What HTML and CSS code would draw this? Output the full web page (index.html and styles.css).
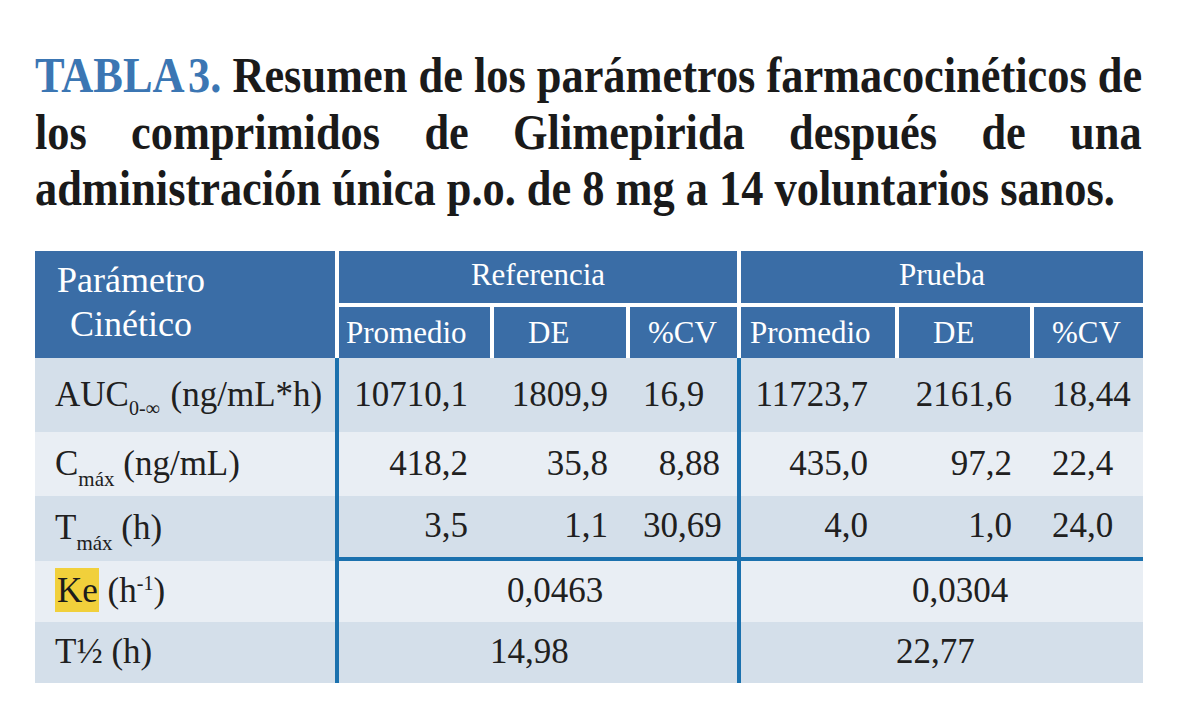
FILE: index.html
```html
<!DOCTYPE html>
<html lang="es">
<head>
<meta charset="utf-8">
<title>Tabla 3</title>
<link rel="stylesheet" href="styles.css">
</head>
<body>
<main class="page">
  <h1 class="title">
    <span class="line just"><span class="tag">TABLA 3.</span> Resumen de los parámetros farmacocinéticos de</span>
    <span class="line just">los comprimidos de Glimepirida después de una</span>
    <span class="line">administración única p.o. de 8 mg a 14 voluntarios sanos.</span>
  </h1>

  <section class="table">
    <div class="thead">
      <div class="th th-param"><span class="param-text">Parámetro<br>Cinético</span></div>
      <div class="th th-group">Referencia</div>
      <div class="th th-group">Prueba</div>
      <div class="th th-sub sub-prom">Promedio</div>
      <div class="th th-sub sub-de">DE</div>
      <div class="th th-sub sub-cv">%CV</div>
      <div class="th th-sub sub-prom2">Promedio</div>
      <div class="th th-sub sub-de">DE</div>
      <div class="th th-sub sub-cv">%CV</div>
    </div>

    <div class="tbody">
      <div class="td label dark"><span>AUC<sub class="sb sb-auc">0-∞</sub> (ng/mL*h)</span></div>
      <div class="td dark c-rp">10710,1</div>
      <div class="td dark c-rd">1809,9</div>
      <div class="td dark c-rc cv-left sep">16,9</div>
      <div class="td dark c-pp">11723,7</div>
      <div class="td dark c-pd">2161,6</div>
      <div class="td dark c-pc">18,44</div>

      <div class="td label light"><span>C<sub class="sb">máx</sub> (ng/mL)</span></div>
      <div class="td light c-rp">418,2</div>
      <div class="td light c-rd">35,8</div>
      <div class="td light c-rc cv-right sep">8,88</div>
      <div class="td light c-pp">435,0</div>
      <div class="td light c-pd">97,2</div>
      <div class="td light c-pc">22,4</div>

      <div class="td label dark"><span>T<sub class="sb">máx</sub> (h)</span></div>
      <div class="td dark c-rp rule">3,5</div>
      <div class="td dark c-rd rule">1,1</div>
      <div class="td dark c-rc cv-left sep rule">30,69</div>
      <div class="td dark c-pp rule">4,0</div>
      <div class="td dark c-pd rule">1,0</div>
      <div class="td dark c-pc rule">24,0</div>

      <div class="td label light"><span><mark class="hl">Ke</mark> (h<sup class="sp">-1</sup>)</span></div>
      <div class="td light span3 sep ke-ref">0,0463</div>
      <div class="td light span3 ke-pru">0,0304</div>

      <div class="td label dark"><span>T½ (h)</span></div>
      <div class="td dark span3 sep th-ref">14,98</div>
      <div class="td dark span3 th-pru">22,77</div>
    </div>
  </section>
</main>
</body>
</html>
```

FILE: styles.css
```css
html, body {
  margin: 0;
  padding: 0;
  background: #ffffff;
}

.page {
  padding: 47px 0 0 35px;
  font-family: "Liberation Serif", "Times New Roman", serif;
  color: #1c1c1c;
}

/* ---------- Title ---------- */
.title {
  margin: 0;
  width: 1272px;
  font-size: 51px;
  line-height: 56.5px;
  font-weight: 700;
  color: #1a1a1a;
  transform: scaleX(0.87);
  transform-origin: 0 0;
  height: 169.5px;
}

.line {
  display: block;
  white-space: nowrap;
}

.line.just {
  text-align: justify;
  text-align-last: justify;
}

.tag {
  display: inline-block;
  color: #3b76b3;
  word-spacing: -6px;
}

/* ---------- Table ---------- */
.table {
  margin-top: 34px;
  width: 1108px;
}

.thead {
  display: grid;
  grid-template-columns: 300px 151px 132px 107px 154px 131px 109px;
  grid-template-rows: 52px 51px;
  column-gap: 4px;
  row-gap: 4px;
  background: #ffffff;
}

.th {
  background: #3a6da6;
  color: #ffffff;
  font-size: 31px;
  display: flex;
  align-items: center;
}

.th-param {
  grid-row: 1 / span 2;
  align-items: flex-start;
  font-size: 36px;
  line-height: 44px;
  padding: 7px 0 0 22px;
}

.param-text {
  display: inline-block;
  text-align: center;
}

.th-group {
  grid-column: span 3;
  justify-content: center;
  padding-bottom: 4px;
}

.th-sub {
  padding-top: 2px;
}

.sub-prom { padding-left: 7px; }
.sub-prom2 { padding-left: 9px; }
.sub-de { padding-left: 34px; }
.sub-cv { padding-left: 18px; }

.tbody {
  display: grid;
  grid-template-columns: 304px 155px 136px 111px 158px 135px 109px;
  grid-template-rows: 74px 64px 65px 61px 61px;
}

.td {
  box-sizing: border-box;
  font-size: 35px;
  color: #202020;
  display: flex;
  align-items: center;
  white-space: nowrap;
}

.dark { background: #d4dfea; }
.light { background: #e9eef4; }

.label {
  border-right: 4px solid #1b71ae;
  padding-left: 20px;
}

.sep {
  border-right: 4px solid #1b71ae;
}

.rule {
  border-bottom: 4px solid #1b71ae;
}

.c-rp { justify-content: flex-end; padding-right: 26px; }
.c-rd { justify-content: flex-end; padding-right: 22px; }
.cv-left { padding-left: 13px; }
.cv-right { justify-content: flex-end; padding-right: 17px; }
.c-pp { justify-content: flex-end; padding-right: 31px; }
.c-pd { justify-content: flex-end; padding-right: 22px; }
.c-pc { padding-left: 18px; }

.span3 { grid-column: span 3; }
.ke-ref { padding-left: 168px; }
.ke-pru { padding-left: 171px; }
.th-ref { padding-left: 151px; }
.th-pru { padding-left: 155px; }

.sb {
  font-size: 21px;
  vertical-align: -11px;
  line-height: 0;
  margin-right: 0;
}

.sb-auc {
  font-size: 20px;
  vertical-align: -9px;
  margin-right: 2px;
}

.sp {
  font-size: 20px;
  vertical-align: 12px;
  line-height: 0;
}

.hl {
  background: #f1d03b;
  color: #1c1c1c;
  padding: 3px 1px 2px 2px;
}
```
